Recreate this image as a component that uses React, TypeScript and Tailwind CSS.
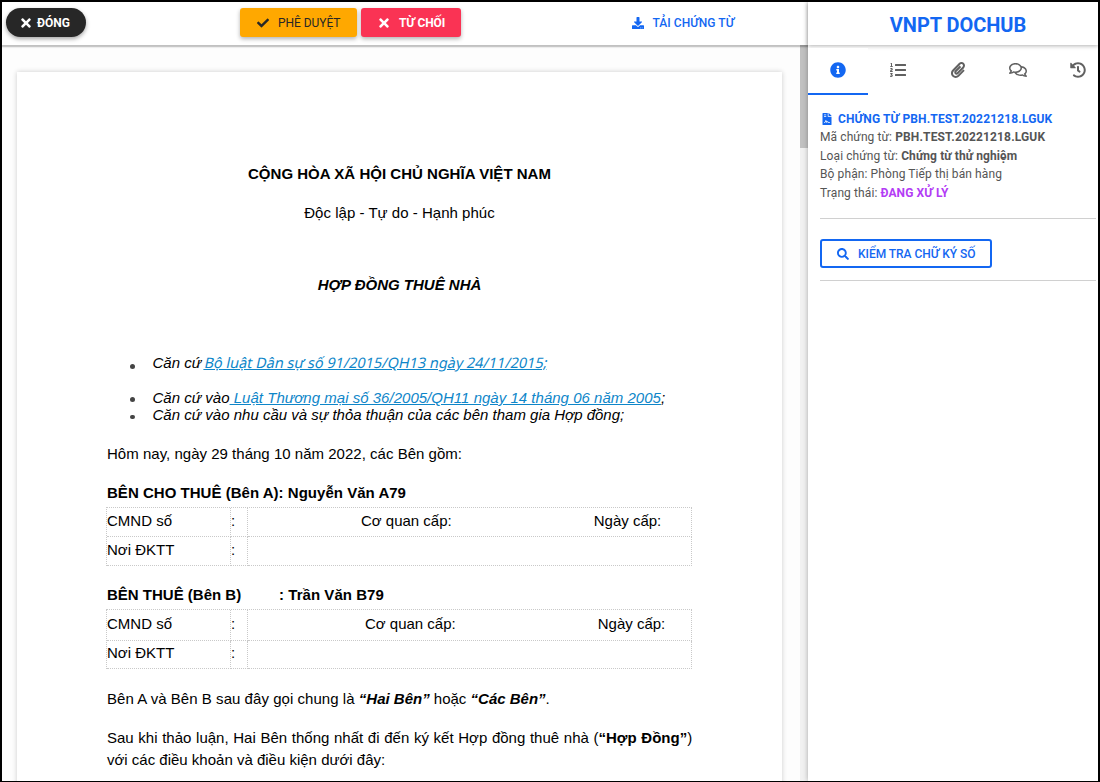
import type { ReactNode } from "react";
import {
  FaTimes,
  FaCheck,
  FaDownload,
  FaInfoCircle,
  FaListOl,
  FaPaperclip,
  FaRegComments,
  FaHistory,
  FaSearch,
  FaFileContract,
} from "react-icons/fa";

function Toolbar() {
  return (
    <header className="z-10 flex h-[43px] shrink-0 items-start bg-white pt-[6px] pl-1 text-[12px] shadow-[0_1px_1px_1px_rgba(0,0,0,0.14),0_2px_2px_rgba(0,0,0,0.12)]">
      <button className="flex h-[29px] w-[80px] items-center rounded-full bg-[#272727] pl-[15px] font-bold text-white shadow-[0_2px_4px_rgba(0,0,0,0.35)]">
        <FaTimes className="h-[14px] w-[10px]" />
        <span className="ml-[6px]">ĐÓNG</span>
      </button>
      <button className="ml-[154px] flex h-[29px] w-[117px] items-center rounded-[3px] bg-[#ffa800] pl-[17px] text-[#272727] shadow-[0_2px_4px_rgba(0,0,0,0.3)]">
        <FaCheck className="size-[12px]" />
        <span className="ml-[9px] tracking-[-0.05px]">PHÊ DUYỆT</span>
      </button>
      <button className="ml-1 flex h-[29px] w-[100px] items-center rounded-[3px] bg-[#fa3354] pl-[18px] font-bold text-white shadow-[0_2px_4px_rgba(0,0,0,0.3)]">
        <FaTimes className="h-[14px] w-[10px]" />
        <span className="ml-[10px] tracking-[-0.14px]">TỪ CHỐI</span>
      </button>
      <button className="ml-[171px] flex h-[29px] items-center font-medium text-[#1367f2]">
        <FaDownload className="size-[12px]" />
        <span className="ml-[8.5px] tracking-[0.05px]">TẢI CHỨNG TỪ</span>
      </button>
    </header>
  );
}

function PartyTable({ rows, cells, first, second }: { rows: string; cells: string; first: string; second: string }) {
  const line = "border-dotted border-[#c9c9c9]";
  return (
    <div className={`ml-[89px] grid w-[586px] grid-cols-[124px_17px_444px] border-t border-l ${line} ${rows}`}>
      <div className={`border-r border-b ${first} ${line}`}>CMND số</div>
      <div className={`border-r border-b ${first} ${line}`}>:</div>
      <div className={`flex border-r border-b ${first} ${cells} ${line}`}>
        <span>Cơ quan cấp:</span>
        <span className="ml-[142px]">Ngày cấp:</span>
      </div>
      <div className={`border-r border-b ${second} ${line}`}>Nơi ĐKTT</div>
      <div className={`border-r border-b ${second} ${line}`}>:</div>
      <div className={`border-r border-b ${line}`} />
    </div>
  );
}

function Clause({ className, dot, children }: { className?: string; dot: string; children: ReactNode }) {
  return (
    <li className={`flex h-[20px] items-center whitespace-pre pl-[113px] ${className ?? ""}`}>
      <span className={`mr-[18px] size-[4.5px] shrink-0 rounded-full bg-[#444] ${dot}`} />
      <span>{children}</span>
    </li>
  );
}

function Contract() {
  return (
    <article className="h-[800px] w-[765px] shrink-0 bg-white pt-[92px] font-['Liberation_Sans',sans-serif] text-[15px] leading-[20px] text-black shadow-[0_0_5px_rgba(0,0,0,0.2)]">
      <h1 className="text-center font-bold tracking-[0.023px]">CỘNG HÒA XÃ HỘI CHỦ NGHĨA VIỆT NAM</h1>
      <p className="mt-[19px] text-center tracking-[0.023px]">Độc lập - Tự do - Hạnh phúc</p>
      <h2 className="mt-[52px] text-center font-bold italic">HỢP ĐỒNG THUÊ NHÀ</h2>
      <ul className="mt-[58px] italic">
        <Clause dot="mt-[7px]">
          Căn cứ{" "}
          <a className="inline-block -skew-x-12 font-['Noto_Sans',sans-serif] text-[14.5px] leading-[18px] tracking-[-0.03px] text-[#0e86c9] not-italic underline">
            Bộ luật Dân sự số 91/2015/QH13 ngày 24/11/2015;
          </a>
        </Clause>
        <Clause className="mt-[15px]" dot="mt-[3px]">
          Căn cứ vào
          <a className="tracking-[0.02px] text-[#0e86c9] underline"> Luật Thương mại số 36/2005/QH11 ngày 14 tháng 06 năm 2005</a>;
        </Clause>
        <Clause className="mt-[-3px]" dot="mt-[4px]">
          Căn cứ vào nhu cầu và sự thỏa thuận của các bên tham gia Hợp đồng;
        </Clause>
      </ul>
      <p className="mt-[19px] pl-[90px] tracking-[0.018px]">Hôm nay, ngày 29 tháng 10 năm 2022, các Bên gồm:</p>
      <h3 className="mt-[19px] pl-[90px] font-bold tracking-[0.025px]">BÊN CHO THUÊ (Bên A): Nguyễn Văn A79</h3>
      <div className="mt-[4px]">
        <PartyTable rows="grid-rows-[29px_29px]" cells="pl-[113px]" first="pt-[3px]" second="pt-[3px]" />
      </div>
      <h3 className="mt-[19px] flex pl-[90px] font-bold">
        <span className="w-[172px]">BÊN THUÊ (Bên B)</span>
        <span className="tracking-[0.05px]">: Trần Văn B79</span>
      </h3>
      <div className="mt-[4px]">
        <PartyTable rows="grid-rows-[31px_28px]" cells="pl-[117px]" first="pt-[4px]" second="pt-[2px]" />
      </div>
      <p className="mt-[20px] pl-[90px]">
        <span className="tracking-[0.045px]">Bên A và Bên B sau đây gọi chung là </span>
        <b className="italic">“Hai Bên”</b> hoặc <b className="italic">“Các Bên”</b>.
      </p>
      <p className="mt-[18px] whitespace-nowrap pl-[90px] leading-[22px] [word-spacing:0.5px]">
        Sau khi thảo luận, Hai Bên thống nhất đi đến ký kết Hợp đồng thuê nhà (<b>“Hợp Đồng”</b>)
      </p>
      <p className="pl-[90px] leading-[21px]">với các điều khoản và điều kiện dưới đây:</p>
    </article>
  );
}

function Sidebar() {
  return (
    <aside className="z-20 flex w-[290px] shrink-0 flex-col bg-white shadow-[0_0_5px_rgba(0,0,0,0.3)]">
      <div className="flex h-[43px] shrink-0 items-center justify-center pt-[2px] pl-[10px] text-[20px] font-bold tracking-[-0.05px] text-[#1367f2] shadow-[0_1px_4px_rgba(0,0,0,0.3)]">
        VNPT DOCHUB
      </div>
      <nav className="relative mt-[3px] flex h-[47px] shrink-0 overflow-hidden text-[16px] text-[#616161]">
        <span className="flex w-[60px] shrink-0 justify-center border-b-2 border-[#1367f2] bg-white pt-[14px] text-[#1367f2]">
          <FaInfoCircle />
        </span>
        <span className="flex w-[60px] shrink-0 justify-center pt-[14px]">
          <FaListOl />
        </span>
        <span className="flex w-[60px] shrink-0 justify-center pt-[14px]">
          <FaPaperclip />
        </span>
        <span className="flex w-[60px] shrink-0 justify-center pt-[14px]">
          <FaRegComments className="h-[16px] w-[18px]" />
        </span>
        <span className="flex w-[60px] shrink-0 justify-center pt-[14px]">
          <FaHistory />
        </span>
      </nav>
      <section className="mt-[14.7px] ml-3 w-[276px] text-[12px] leading-[18.6px] tracking-[0.1px] text-[#555]">
        <h2 className="flex items-center font-bold tracking-[0.14px] text-[#1367f2]">
          <FaFileContract className="mr-[5px] ml-[1px] size-[12px]" />
          CHỨNG TỪ PBH.TEST.20221218.LGUK
        </h2>
        <p>
          Mã chứng từ: <b className="tracking-[0.146px]">PBH.TEST.20221218.LGUK</b>
        </p>
        <p>
          Loại chứng từ: <b>Chứng từ thử nghiệm</b>
        </p>
        <p>Bộ phận: Phòng Tiếp thị bán hàng</p>
        <p>
          Trạng thái: <b className="text-[#b33cf5]">ĐANG XỬ LÝ</b>
        </p>
        <hr className="mt-[15.3px] border-[#d0d0d0]" />
        <button className="mt-[20px] flex h-[29px] w-[172px] items-center rounded-[3px] border-2 border-[#1367f2] pt-px pl-[15px] font-medium tracking-[-0.03px] text-[#1367f2]">
          <FaSearch className="mr-[9px] size-[12px]" />
          KIỂM TRA CHỮ KÝ SỐ
        </button>
        <hr className="mt-[12px] border-[#d0d0d0]" />
      </section>
    </aside>
  );
}

export default function App() {
  return (
    <div className="flex h-[782px] w-[1100px] overflow-hidden border-2 border-b border-black bg-white font-['Roboto',sans-serif]">
      <main className="flex w-[806px] shrink-0 flex-col">
        <Toolbar />
        <div className="flex min-h-0 flex-1 overflow-hidden">
          <div className="flex-1 overflow-hidden bg-[#fdfdfd] pt-[27px] pl-[15px]">
            <Contract />
          </div>
          <div className="w-2 shrink-0 bg-[#f1f1f1]">
            <div className="h-[103px] bg-[#c1c1c1]" />
          </div>
        </div>
      </main>
      <Sidebar />
    </div>
  );
}
